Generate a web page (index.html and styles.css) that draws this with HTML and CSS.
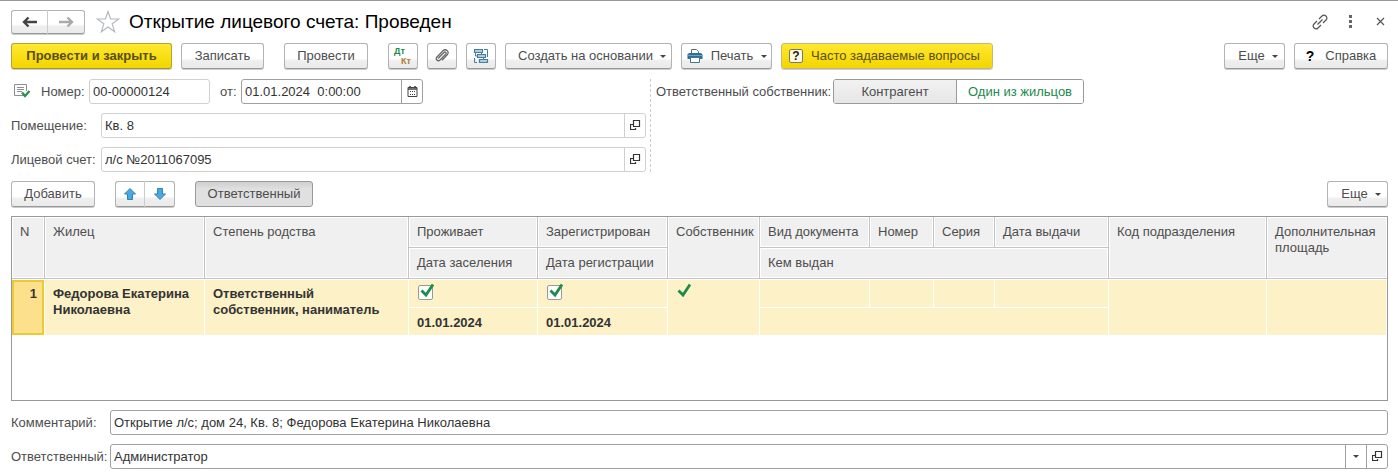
FILE: index.html
```html
<!DOCTYPE html>
<html lang="ru">
<head>
<meta charset="utf-8">
<title>Открытие лицевого счета: Проведен</title>
<link rel="stylesheet" href="styles.css">
</head>
<body>
<svg class="sprite" aria-hidden="true">
  <symbol id="open" viewBox="0 0 11 11"><path d="M3.500 .5h6v6h-6zM3 4.500H.5v5h5V8" fill="none" stroke="#333" stroke-width="1.200"/></symbol>
  <symbol id="check" viewBox="0 0 15 15"><path d="M1.500 7.500l4.500 4.500L13 1.500" fill="none" stroke="#1c8b4d" stroke-width="2.800"/></symbol>
</svg>
<main class="form">
  <header class="titlebar">
    <div class="pair">
      <button class="btn nav" type="button" aria-label="Назад"><svg width="16" height="12" viewBox="0 0 16 12"><path d="M2 6h13M6.500 1.500L2 6l4.500 4.500" fill="none" stroke="#444" stroke-width="2.400"/></svg></button>
      <button class="btn nav" type="button" aria-label="Вперед"><svg width="16" height="12" viewBox="0 0 16 12"><path d="M1 6h13M9.500 1.500L14 6l-4.500 4.500" fill="none" stroke="#aaa" stroke-width="2.400"/></svg></button>
    </div>
    <button class="plain star" type="button" aria-label="В избранное"><svg width="24" height="24" viewBox="0 0 24 24"><path d="M12 1.500l2.600 7.500h8l-6.400 4.800 2.400 7.900L12 17l-6.600 4.700 2.400-7.900L1.400 9h8z" fill="#fff" stroke="#b4b8be" stroke-width="1.200"/></svg></button>
    <h1>Открытие лицевого счета: Проведен</h1>
    <div class="window-tools">
      <button class="plain" type="button" aria-label="Ссылка"><svg width="16" height="16" viewBox="0 0 16 16" fill="none" stroke="#555" stroke-width="1.200"><path d="M7 5l3-3c2.500-2.500 6.500 1 4 4l-3 3M9 11l-3 3c-2.500 2.500-6.500-1-4-4l3-3M5.500 10.500l5-5"/></svg></button>
      <button class="plain" type="button" aria-label="Меню"><svg width="16" height="16" viewBox="0 0 16 16" fill="#666"><path d="M7 1h3v3H7zM7 6h3v3H7zM7 11h3v3H7z"/></svg></button>
      <button class="plain" type="button" aria-label="Закрыть"><svg width="16" height="16" viewBox="0 0 16 16"><path d="M5 4l7 7M12 4l-7 7" stroke="#555" stroke-width="1.200"/></svg></button>
    </div>
  </header>

  <div class="toolbar commands">
    <button class="btn primary" type="button">Провести и закрыть</button>
    <button class="btn save" type="button">Записать</button>
    <button class="btn mid group" type="button">Провести</button>
    <button class="btn icon group dtkt" type="button" aria-label="Дт Кт"><span class="dt">Дт</span><span class="kt">Кт</span></button>
    <button class="btn icon" type="button" aria-label="Присоединенные файлы"><svg width="16" height="16" viewBox="0 0 16 16"><path d="M4 10.500L10 4.500c1.300-1.200 2.800.3 1.700 1.600L6 12c-2.200 2-5-.8-3-3L9 2.800c3-2.800 6.800 1 4.200 4L8 12.200" fill="none" stroke="#666" stroke-width="1.300"/></svg></button>
    <button class="btn icon" type="button" aria-label="Структура подчиненности"><svg width="16" height="16" viewBox="0 0 16 16"><path d="M1.500 1.500h8v3h-8zM4.500 6.500h8v3h-8zM6.500 11.500h8v3h-8z" fill="#b4cbdc" stroke="#477f9f" stroke-width="1.200"/><path d="M11 1.500h3.500V9M2.500 5v3H4M4 14.500H1.500V10M8.500 5v1M10.500 10v1" fill="none" stroke="#477f9f"/></svg></button>
    <button class="btn create" type="button">Создать на основании<i class="caret"></i></button>
    <button class="btn print" type="button"><svg width="16" height="16" viewBox="0 0 16 16"><path d="M4.500 6V1.500h5l2 2V6" fill="#fff" stroke="#666"/><path d="M2 5h12l1.500 1.500V11h-15V6.500z" fill="#2c6f9b"/><path d="M1 7.500h14" stroke="#62a7cc"/><path d="M3.500 9.500h9v5h-9z" fill="#fff" stroke="#4c7188"/></svg><span>Печать</span><i class="caret"></i></button>
    <button class="btn faq" type="button"><span class="question">?</span>Часто задаваемые вопросы</button>
    <span class="spacer"></span>
    <button class="btn more" type="button">Еще<i class="caret"></i></button>
    <button class="btn help" type="button"><b>?</b>Справка</button>
  </div>

  <div class="fields">
    <div class="left">
      <div class="row">
        <svg class="posted" width="18" height="15" viewBox="0 0 18 15"><path d="M11 11.500H.5V.5h12V7" fill="#fff" stroke="#8b8f94"/><path d="M3 3.500h7M3 5.500h7M3 7.500h5" stroke="#8b8f94"/><path d="M8 8.500l3 3.500L15.500 7" fill="none" stroke="#2b9250" stroke-width="2.400"/></svg>
        <label class="number-label" for="number">Номер:</label>
        <div class="field pale number"><input id="number" value="00-00000124" readonly></div>
        <label class="from" for="date">от:</label>
        <div class="field date"><input id="date" value="01.01.2024  0:00:00"><button type="button" aria-label="Календарь"><svg width="11" height="11" viewBox="0 0 11 11"><path d="M1 1.500h9v9H1z" fill="#fff" stroke="#444"/><path d="M1 3h9M3 0v2M8 0v2" stroke="#444" stroke-width="1.600"/><path d="M3 5.500h6M3 8.500h6" stroke="#444" stroke-dasharray="1 1"/></svg></button></div>
      </div>
      <div class="row">
        <label class="side" for="room">Помещение:</label>
        <div class="field pale"><input id="room" value="Кв. 8"><button type="button" aria-label="Открыть помещение"><svg width="11" height="11"><use href="#open"/></svg></button></div>
      </div>
      <div class="row">
        <label class="side" for="account">Лицевой счет:</label>
        <div class="field pale"><input id="account" value="л/с №2011067095"><button type="button" aria-label="Открыть лицевой счет"><svg width="11" height="11"><use href="#open"/></svg></button></div>
      </div>
    </div>
    <div class="right">
      <div class="row">
        <span class="owner-label" id="owner">Ответственный собственник:</span>
        <div class="switch" role="group" aria-labelledby="owner">
          <button class="on" type="button" aria-pressed="true">Контрагент</button>
          <button type="button" aria-pressed="false">Один из жильцов</button>
        </div>
      </div>
    </div>
  </div>

  <div class="toolbar">
    <button class="btn mid" type="button">Добавить</button>
    <div class="pair group">
      <button class="btn icon" type="button" aria-label="Вверх"><svg width="14" height="14" viewBox="0 0 14 14"><path d="M7 1.500l5.500 5.500H9.500v5.500h-5V7H1.500z" fill="#46abe4" stroke="#3c7fa8"/></svg></button>
      <button class="btn icon" type="button" aria-label="Вниз"><svg width="14" height="14" viewBox="0 0 14 14"><path d="M7 12.500L1.500 7h3V1.500h5V7h3z" fill="#46abe4" stroke="#3c7fa8"/></svg></button>
    </div>
    <button class="btn group pressed" type="button" aria-pressed="true">Ответственный</button>
    <span class="spacer"></span>
    <button class="btn more" type="button">Еще<i class="caret"></i></button>
  </div>

  <div class="grid">
    <table>
      <colgroup><col class="c-n"><col class="c-name"><col class="c-kin"><col class="c-live"><col class="c-reg"><col class="c-own"><col class="c-doc"><col class="c-num"><col class="c-ser"><col class="c-issue"><col class="c-code"><col class="c-area"></colgroup>
      <thead>
        <tr><th rowspan="2">N</th><th rowspan="2">Жилец</th><th rowspan="2">Степень родства</th><th>Проживает</th><th>Зарегистрирован</th><th rowspan="2" class="tight">Собственник</th><th>Вид документа</th><th>Номер</th><th>Серия</th><th>Дата выдачи</th><th rowspan="2">Код подразделения</th><th rowspan="2">Дополнительная площадь</th></tr>
        <tr><th>Дата заселения</th><th>Дата регистрации</th><th colspan="4">Кем выдан</th></tr>
      </thead>
      <tbody>
        <tr>
          <td rowspan="2" class="current">1</td>
          <td rowspan="2" class="tight">Федорова Екатерина Николаевна</td>
          <td rowspan="2">Ответственный собственник, наниматель</td>
          <td class="tick"><span class="box"><input type="checkbox" checked aria-label="Проживает"><svg width="15" height="15"><use href="#check"/></svg></span></td>
          <td class="tick"><span class="box"><input type="checkbox" checked aria-label="Зарегистрирован"><svg width="15" height="15"><use href="#check"/></svg></span></td>
          <td rowspan="2" class="tick"><svg class="mark" width="15" height="15" role="img" aria-label="Собственник"><use href="#check"/></svg></td>
          <td></td><td></td><td></td><td></td>
          <td rowspan="2"></td><td rowspan="2"></td>
        </tr>
        <tr><td>01.01.2024</td><td>01.01.2024</td><td colspan="4"></td></tr>
      </tbody>
    </table>
  </div>

  <div class="row">
    <label class="foot" for="comment">Комментарий:</label>
    <div class="field"><input id="comment" value="Открытие л/с; дом 24, Кв. 8; Федорова Екатерина Николаевна"></div>
  </div>
  <div class="row">
    <label class="foot" for="responsible">Ответственный:</label>
    <div class="field"><input id="responsible" value="Администратор"><button type="button" aria-label="Выбрать"><i class="caret"></i></button><button type="button" aria-label="Открыть ответственного"><svg width="11" height="11"><use href="#open"/></svg></button></div>
  </div>
</main>
</body>
</html>
```

FILE: styles.css
```css
* { box-sizing: border-box; }
body {
  margin: 0;
  background: #fff;
  color: #4d4d4d;
  font: 13px/16px "Liberation Sans", Arial, sans-serif;
}
button, input { font: inherit; color: inherit; margin: 0; }
svg { display: block; flex: none; }
.sprite { position: absolute; width: 0; height: 0; }

.form {
  display: flex;
  flex-direction: column;
  gap: 9px;
  padding: 8px 10px 4px 11px;
  border-top: 1px solid #999;
}

.titlebar { display: flex; align-items: center; height: 25px; }
h1 { margin: 0 0 0 9px; font-size: 19px; line-height: 24px; font-weight: 400; color: #000; white-space: nowrap; }
.plain { display: flex; padding: 0; border: 0; background: none; }
.star { margin-left: 11px; }
.window-tools { display: flex; gap: 14px; margin-left: auto; }

.btn {
  display: flex;
  align-items: center;
  justify-content: center;
  height: 26px;
  padding: 0 13px;
  border: 1px solid #b3b3b3;
  border-bottom-color: #999;
  border-radius: 3px;
  background: linear-gradient(#fff 60%, #eee 70%, #ebebeb);
  box-shadow: 0 1px 0 #ccc;
  white-space: nowrap;
}
.pair { display: flex; }
.pair .btn:first-child { border-radius: 3px 0 0 3px; border-right-color: #ccc; }
.pair .btn:last-child { border-radius: 0 3px 3px 0; border-left: 0; }
.nav { width: 37px; height: 24px; }
.toolbar { display: flex; align-items: center; gap: 9px; }
.commands { margin-bottom: 1px; }
.group { margin-left: 11px; }
.spacer { flex: 1; }
.primary, .faq {
  background: linear-gradient(#ffe92e, #f3d500);
  border-color: #b5a237;
  border-bottom-color: #a3922d;
}
.primary { width: 161px; font-weight: 700; color: #5a4e12; }
.faq { width: 212px; padding: 0 7px; justify-content: flex-start; gap: 8px; border-color: #c4b880; color: #5a4e12; }
.question { width: 14px; height: 14px; border: 1px solid #777; border-radius: 2px; background: #fffbe0; color: #222; font-weight: 700; font-size: 12px; line-height: 12px; }
.mid { width: 84px; }
.save { width: 83px; }
.icon { width: 30px; padding: 0; }
.dtkt { display: grid; grid-template-columns: 6px 12px; align-content: center; font-size: 9px; line-height: 10px; font-weight: 700; }
.dt { grid-area: 1 / 1; color: #1c8b4d; }
.kt { grid-area: 2 / 2; color: #a97d35; }
.caret { flex: none; border: solid transparent; border-width: 3px 3px 0; border-top-color: #444; }
.create { width: 167px; gap: 7px; padding: 0 6px 0 13px; }
.print { width: 91px; gap: 8px; padding: 0 6px 0 7px; }
.more { width: 61px; gap: 7px; padding: 0 6px 0 13px; }
.help { width: 94px; gap: 11px; padding: 0; }
.help b { color: #000; font-size: 14px; }
.pressed { width: 118px; padding: 0; background: linear-gradient(#cfcfcf, #e0e0e0 30%); border-color: #999; box-shadow: none; }

.row { display: flex; align-items: center; min-height: 25px; }
.fields { display: grid; grid-template-columns: 640px 1fr; }
.left { display: flex; flex-direction: column; gap: 9px; padding-right: 4px; border-right: 1px dashed #ccc; }
.right { padding-left: 5px; }
.posted { margin: 0 9px 0 3px; }
.number-label { width: 48px; }
.side { flex: none; width: 90px; }
.foot { flex: none; width: 99px; }
.field { display: flex; flex: 1; height: 25px; border: 1px solid #a0a0a0; border-radius: 3px; background: #fff; color: #333; }
.field input { flex: 1; min-width: 0; padding: 0 3px; border: 0; background: none; outline: 0; white-space: pre; }
.field button { display: flex; flex: none; align-items: center; justify-content: center; width: 21px; padding: 0; border: 0; border-left: 1px solid #a0a0a0; background: none; }
.pale, .pale button { border-color: #d0d0d0; }
.number { flex: none; width: 121px; }
.date { flex: none; width: 182px; }
.from { width: 31px; padding-left: 10px; }
.owner-label { width: 177px; white-space: nowrap; }
.switch { display: flex; height: 25px; border: 1px solid #999; border-radius: 3px; overflow: hidden; }
.switch button { width: 126px; padding: 0; border: 0; background: #fff; color: #23894d; }
.switch .on { width: 123px; border-right: 1px solid #999; background: linear-gradient(#f2f2f2, #e6e6e6); color: #4d4d4d; }

.grid { min-height: 185px; border: 1px solid #999; }
table { width: 100%; table-layout: fixed; border-collapse: separate; border-spacing: 0; }
.c-n { width: 33px; }
.c-name { width: 160px; }
.c-kin { width: 204px; }
.c-live { width: 129px; }
.c-reg { width: 130px; }
.c-own { width: 92px; }
.c-doc { width: 110px; }
.c-num { width: 64px; }
.c-ser { width: 61px; }
.c-issue { width: 114px; }
.c-code { width: 158px; }
th, td { height: 31px; padding: 7px 8px 6px; text-align: left; vertical-align: top; }
th { font-weight: 400; background: #f0f0f0; border: solid #c4c4c4; border-width: 0 1px 1px 0; box-shadow: inset 0 0 0 1px #fff; }
th:last-child[rowspan] { border-right: 0; }
.tight { padding-right: 0; }
td { height: 28px; padding: 6px 8px 4px; font-weight: 700; color: #333; background: #fdf1c7; border: solid #fff; border-width: 0 1px 1px 0; }
tbody tr:first-child td { border-top: 1px solid #fff; height: 29px; }
tbody tr:last-child td { padding-top: 7px; }
td.current { padding: 6px 7px 4px; text-align: right; background: #fde08c; box-shadow: inset 0 0 0 2px #eccb32; }
td.tick { padding: 3px 9px 0; }
.box { position: relative; display: block; width: 15px; height: 15px; margin-top: 2px; }
.box input { display: block; appearance: none; width: 15px; height: 15px; border: 1px solid #999; border-radius: 2px; background: #fff; }
.box svg { position: absolute; left: 2px; top: -2px; }
```
